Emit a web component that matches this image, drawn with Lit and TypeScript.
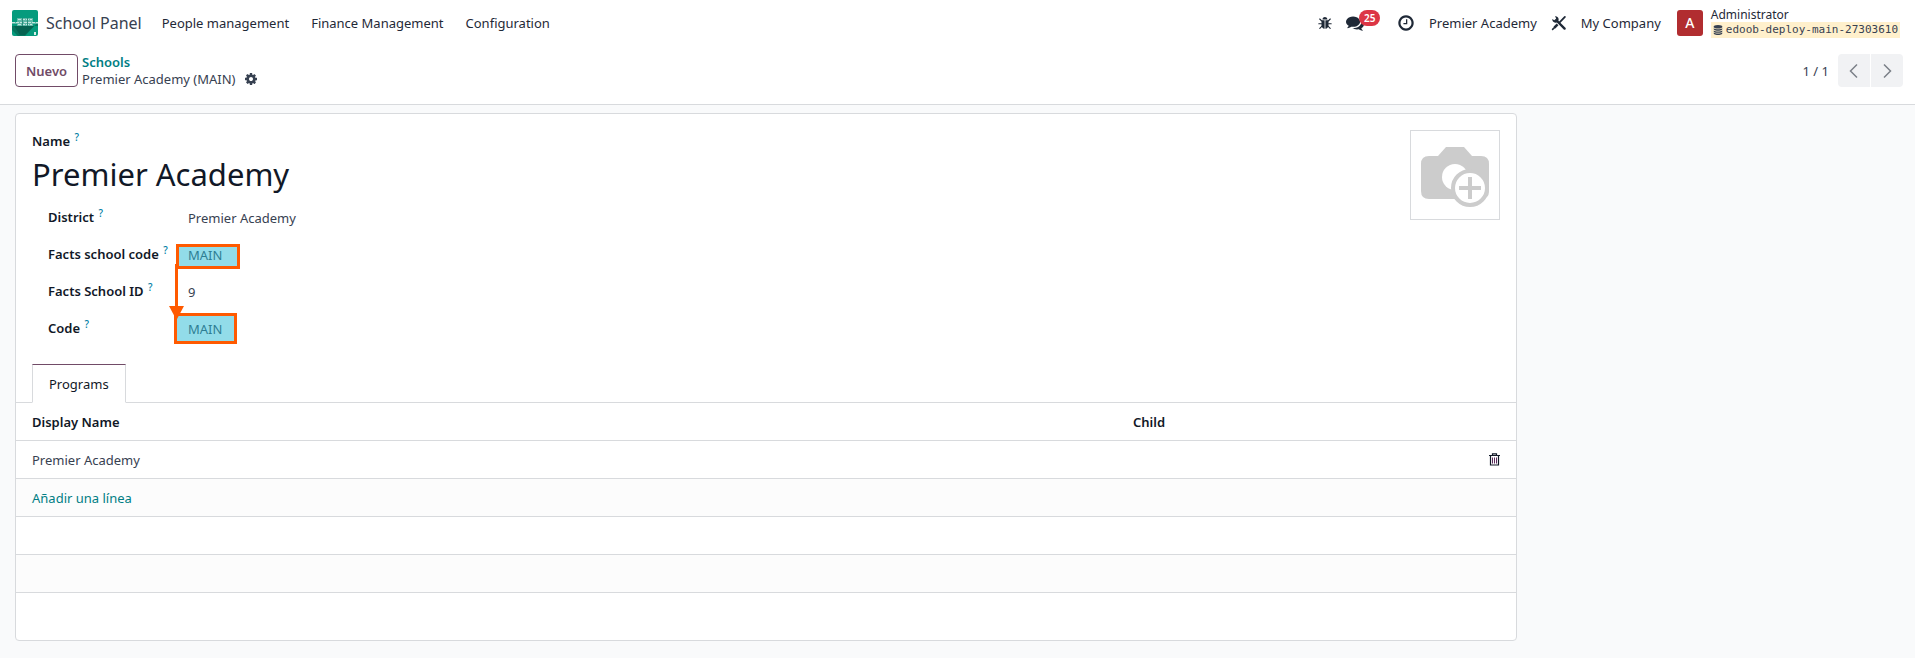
import { LitElement, html, css, svg } from "lit";
import { customElement, state } from "lit/decorators.js";

const COG = "M1152 896q0-106-75-181t-181-75-181 75-75 181 75 181 181 75 181-75 75-181zm512-109v222q0 12-8 23t-20 13l-185 28q-19 54-39 91 35 50 107 138 10 12 10 25t-9 23q-27 37-99 108t-94 71q-12 0-26-9l-138-108q-44 23-91 38-16 136-29 186-7 28-36 28h-222q-14 0-24.5-8.5t-11.5-21.5l-28-184q-49-16-90-37l-141 107q-10 9-25 9-14 0-25-11-126-114-165-168-7-10-7-23 0-12 8-23 15-21 51-66.5t54-70.5q-27-50-41-99l-183-27q-13-2-21-12.5t-8-23.5v-222q0-12 8-23t19-13l186-28q14-46 39-92-40-57-107-138-10-12-10-24 0-10 9-23 26-36 98.5-107.5t94.5-71.5q13 0 26 10l138 107q44-23 91-38 16-136 29-186 7-28 36-28h222q14 0 24.5 8.5t11.5 21.5l28 184q49 16 90 37l142-107q9-9 24-9 13 0 25 10 129 119 165 170 7 8 7 22 0 12-8 23-15 21-51 66.5t-54 70.5q26 50 41 98l183 28q13 2 21 12.5t8 23.5z";
const COMMENTS = "M1408 768q0 139-94 257t-256.5 186.5-353.5 68.5q-86 0-176-16-124 88-278 128-36 9-86 16h-3q-11 0-20.5-8t-11.5-21q-1-3-1-6.5t.5-6.5 2-6l2.5-5 3.5-5.5 4-5 4.5-5 4-4.5q5-6 23-25t26-29.5 22.5-29 25-38.5 20.5-44q-124-72-195-177t-71-224q0-139 94-257t256.5-186.5 353.5-68.5 353.5 68.5 256.5 186.5 94 257zm384 256q0 120-71 224.5t-195 176.5q10 24 20.5 44t25 38.5 22.5 29 26 29.5 23 25q1 1 4 4.5t4.5 5 4 5 3.5 5.5l2.5 5 2 6 .5 6.5-1 6.5q-3 14-13 22t-22 7q-50-7-86-16-154-40-278-128-90 16-176 16-271 0-472-132 58 4 88 4 161 0 309-45t264-129q125-92 192-212t67-254q0-77-23-152 129 71 204 178t75 230z";
const CLOCK = "M1024 544v448q0 14-9 23t-23 9h-320q-14 0-23-9t-9-23v-64q0-14 9-23t23-9h224v-352q0-14 9-23t23-9h64q14 0 23 9t9 23zm416 352q0-148-73-273t-198-198-273-73-273 73-198 198-73 273 73 273 198 198 273 73 273-73 198-198 73-273zm224 0q0 209-103 385.5t-279.5 279.5-385.5 103-385.5-103-279.5-279.5-103-385.5 103-385.5 279.5-279.5 385.5-103 385.5 103 279.5 279.5 103 385.5z";
const DATABASE = "M896 768q237 0 443-43t325-127v170q0 69-103 128t-280 93.5-385 34.5-385-34.5-280-93.5-103-128v-170q119 84 325 127t443 43zm0 768q237 0 443-43t325-127v170q0 69-103 128t-280 93.5-385 34.5-385-34.5-280-93.5-103-128v-170q119 84 325 127t443 43zm0-384q237 0 443-43t325-127v170q0 69-103 128t-280 93.5-385 34.5-385-34.5-280-93.5-103-128v-170q119 84 325 127t443 43zm0-1152q208 0 385 34.5t280 93.5 103 128v128q0 69-103 128t-280 93.5-385 34.5-385-34.5-280-93.5-103-128v-128q0-69 103-128t280-93.5 385-34.5z";

const glyph = (d: string, size: number) => html`
  <svg width=${size} height=${size} viewBox="0 0 1792 1792" fill="currentColor" aria-hidden="true">${svg`<path d=${d}></path>`}</svg>`;

const logo = html`
  <svg width="26" height="26" viewBox="0 0 26 26" aria-hidden="true">
    <defs><clipPath id="tile"><rect width="26" height="26" rx="2"></rect></clipPath></defs>
    <g clip-path="url(#tile)">
      <rect width="26" height="26" fill="#069b7d"></rect>
      <path d="M0 16H26V12L13 26H6L0 20Z" fill="#06775f"></path>
      <path d="M2 16H22L13 25H8Z" fill="#066351"></path>
      <path d="M0 12H5V8H21V12H26V14H21V16H5V14H0Z" fill="#5fb9a8"></path>
      <path d="M0 12.500H26M6 9.500H20M6 14.500H20" stroke="#c5e6df" stroke-width="1" stroke-dasharray="3 1"></path>
      <path d="M10.500 8V16M15.500 8V16" stroke="#2a8f7b"></path>
      <rect x="22" y="22" width="2" height="3" fill="#d9efe9"></rect>
    </g>
  </svg>`;

const bug = html`
  <svg width="14" height="14" viewBox="0 0 14 14" aria-hidden="true">
    <path d="M4.500 3.600a2.500 2.500 0 0 1 5 0z" fill="currentColor"></path>
    <path d="M3.500 4.300H6.600V12.800C4.600 12.600 3.500 11 3.500 9zM7.400 4.300H10.500V9C10.500 11 9.400 12.600 7.400 12.800z" fill="currentColor"></path>
    <path d="M1.700 3L3.800 5M12.300 3L10.200 5M.8 7.700H3.500M13.200 7.700H10.500M1.800 12.400L4 10.200M12.200 12.400L10 10.200" stroke="currentColor" stroke-width="1.100" stroke-linecap="round"></path>
  </svg>`;

const tools = html`
  <svg width="16" height="16" viewBox="0 0 16 16" fill="none" stroke="currentColor" aria-hidden="true">
    <path d="M5.500 5.500L13.600 13.600" stroke-width="2.400" stroke-linecap="round"></path>
    <path d="M4 1.300A3.200 3.200 0 1 1 1.300 4L3.300 5.300L5.200 3.400Z" fill="currentColor" stroke="none"></path>
    <path d="M13.900 1.900L8.600 7.400" stroke-width="1.800" stroke-linecap="round"></path>
    <path d="M6.600 9.400L3.400 12.600" stroke-width="2.600"></path>
    <path d="M4 12.100L1.600 14.400" stroke-width="1.600" stroke-linecap="round"></path>
  </svg>`;

const trash = html`
  <svg width="11" height="13" viewBox="0 0 11 13" fill="none" stroke="currentColor" aria-hidden="true">
    <path d="M0 2.500H11M1.500 2.500V12H9.500V2.500M3.500 2.500V.8H7.500V2.500" stroke-width="1.200"></path>
    <path d="M3.500 4.500V10.500M5.500 4.500V10.500M7.500 4.500V10.500" stroke="#5b2a5b"></path>
  </svg>`;

const camera = html`
  <svg width="88" height="88" viewBox="0 0 88 88" aria-hidden="true">
    <path d="M35 16H53L61 25H70Q78 25 78 33V60Q78 68 70 68H18Q10 68 10 60V33Q10 25 18 25H27Z" fill="#ccc"></path>
    <circle cx="44" cy="46" r="13" fill="#fff"></circle>
    <circle cx="59" cy="57" r="17" fill="#fff" stroke="#ccc" stroke-width="4"></circle>
    <path d="M59 46V68M48 57H70" stroke="#ccc" stroke-width="4"></path>
  </svg>`;

interface Field { id: string; label: string; value: string; }

@customElement("app-root")
export class AppRoot extends LitElement {
  @state() private fields: Field[] = [
    { id: "district", label: "District", value: "Premier Academy" },
    { id: "facts-code", label: "Facts school code", value: "MAIN" },
    { id: "facts-id", label: "Facts School ID", value: "9" },
    { id: "code", label: "Code", value: "MAIN" },
  ];

  static styles = css`
    :host { display: block; min-height: 100vh; background: #f9fafb; color: #374151; font: 13px/20px "Noto Sans", "Open Sans", sans-serif; }
    * { box-sizing: border-box; }
    svg { display: block; flex: none; }
    a { color: inherit; text-decoration: none; }
    button, input { font: inherit; color: inherit; border: 0; background: none; padding: 0; margin: 0; }
    button { cursor: pointer; }
    .nav { display: flex; align-items: center; height: 46px; padding: 0 15px 0 12px; background: #fff; color: #1f2937; }
    .brand { display: flex; align-items: center; gap: 8px; font-size: 16px; color: #374151; margin-right: 20px; }
    .menu { display: flex; gap: 22px; }
    .tray { display: flex; align-items: center; margin-left: auto; gap: 14px; }
    .chat { position: relative; margin-right: 19px; }
    .badge { position: absolute; left: 13px; top: -4px; padding: 0 5px; border-radius: 8px; background: #dc3545; color: #fff; font-size: 10px; line-height: 16px; font-weight: 600; }
    .user { display: flex; align-items: center; gap: 8px; text-align: left; margin-left: 2px; }
    .avatar { width: 26px; height: 26px; border-radius: 3px; background: #b12d30; color: #fff; line-height: 26px; text-align: center; font-size: 14px; font-weight: 500; }
    .who { display: grid; font-size: 12px; line-height: 14px; }
    .db { display: flex; align-items: center; gap: 3px; padding: 0 2px; background: #fff0cc; color: #374151; font: 11px/16px "DejaVu Sans Mono", monospace; }
    .panel { display: flex; align-items: center; height: 59px; padding: 0 12px 9px 15px; background: #fff; border-bottom: 1px solid #d8dadd; gap: 4px; }
    .new { height: 33px; padding: 0 10px; border: 1px solid #714b67; border-radius: 4px; color: #714b67; font-weight: 600; }
    .crumbs { display: grid; line-height: 17px; }
    .crumbs a { color: #017e84; font-weight: 600; }
    .here { display: flex; align-items: center; gap: 8px; }
    .pager { display: flex; align-items: center; margin-left: auto; gap: 1px; }
    .count { margin-right: 8px; }
    .step { display: grid; place-items: center; width: 32px; height: 33px; background: #f1f2f4; color: #7b8088; }
    .prev { border-radius: 4px 0 0 4px; }
    .next { border-radius: 0 4px 4px 0; }
    .sheet { max-width: 1502px; margin: 8px 15px 17px; padding: 16px 0 47px; background: #fff; border: 1px solid #d8dadd; border-radius: 4px; }
    .head { display: flex; justify-content: space-between; padding: 0 16px; }
    .titles { flex: 1; display: grid; align-content: start; padding-top: 1px; }
    label, th, .tab { color: #111827; }
    label { font-weight: 600; }
    sup { color: #0180a5; font-size: 10px; line-height: 10px; font-weight: 500; vertical-align: 5px; margin-left: 1px; }
    .title { width: 100%; height: 46px; font-size: 31px; color: #111827; }
    .photo { width: 90px; height: 90px; border: 1px solid #d8dadd; }
    .fields { position: relative; padding: 0 16px; margin-top: 1px; }
    .field { display: grid; grid-template-columns: 140px minmax(0, 480px); align-items: center; height: 37px; }
    .field input { padding-top: 2px; }
    .marks { position: absolute; left: 136px; top: 46px; pointer-events: none; }
    .tabs { display: flex; margin-top: 18px; padding: 0 16px; border-bottom: 1px solid #d8dadd; }
    .tab { height: 39px; padding: 0 16px; margin-bottom: -1px; background: #fff; border: 1px solid #d8dadd; border-top-color: #714b67; border-bottom-color: #fff; }
    table { width: 100%; border-collapse: separate; border-spacing: 0; table-layout: fixed; }
    th { text-align: left; font-weight: 600; }
    th, td { height: 38px; padding: 0 16px; border-bottom: 1px solid #d8dadd; }
    tbody tr:nth-child(even) { background: #fcfcfc; }
    .wide { width: 1101px; }
    .del { color: #111827; display: block; margin-left: auto; }
    .add { color: #017e84; }
  `;

  render() {
    return html`
      <header class="nav">
        <a class="brand" href="#">${logo}<span>School Panel</span></a>
        <nav class="menu">
          <a href="#">People management</a><a href="#">Finance Management</a><a href="#">Configuration</a>
        </nav>
        <div class="tray">
          <button aria-label="Debug">${bug}</button>
          <button class="chat" aria-label="Messages">${glyph(COMMENTS, 18)}<span class="badge">25</span></button>
          <button aria-label="Activities">${glyph(CLOCK, 18)}</button>
          <a href="#">Premier Academy</a>
          <button aria-label="Tools">${tools}</button>
          <a href="#">My Company</a>
          <button class="user">
            <span class="avatar">A</span>
            <span class="who"><span>Administrator</span><span class="db">${glyph(DATABASE, 10)}edoob-deploy-main-27303610</span></span>
          </button>
        </div>
      </header>
      <section class="panel">
        <button class="new">Nuevo</button>
        <div class="crumbs">
          <a href="#">Schools</a>
          <span class="here">Premier Academy (MAIN)<button aria-label="Actions">${glyph(COG, 14)}</button></span>
        </div>
        <div class="pager">
          <span class="count">1 / 1</span>
          <button class="step prev" aria-label="Previous">
            <svg width="16" height="16" viewBox="0 0 16 16" fill="none" stroke="currentColor" stroke-width="1.500"><path d="M11 1.500L4.500 8L11 14.500"></path></svg>
          </button>
          <button class="step next" aria-label="Next">
            <svg width="16" height="16" viewBox="0 0 16 16" fill="none" stroke="currentColor" stroke-width="1.500"><path d="M5 1.500L11.500 8L5 14.500"></path></svg>
          </button>
        </div>
      </section>
      <main class="sheet">
        <div class="head">
          <div class="titles">
            <label for="name">Name <sup>?</sup></label>
            <input id="name" class="title" .value=${"Premier Academy"} />
            <div class="fields">
              ${this.fields.map((f) => html`
                <div class="field">
                  <label for=${f.id}>${f.label} <sup>?</sup></label>
                  <input id=${f.id} .value=${f.value} />
                </div>`)}
              <svg class="marks" width="76" height="104" viewBox="0 0 76 104" aria-hidden="true">
                <g fill="#25b9d3" fill-opacity="0.500" stroke="#ff5a00" stroke-width="3">
                  <rect x="9.500" y="1.500" width="61" height="22"></rect>
                  <rect x="7.500" y="70.500" width="60" height="28"></rect>
                </g>
                <path d="M8.500 20V66" stroke="#ff5a00" stroke-width="3"></path>
                <path d="M1 62H16L8.500 76Z" fill="#ff5a00"></path>
              </svg>
            </div>
          </div>
          <button class="photo" aria-label="Add image">${camera}</button>
        </div>
        <div class="tabs" role="tablist"><button class="tab" role="tab" aria-selected="true">Programs</button></div>
        <table>
          <thead><tr><th class="wide">Display Name</th><th>Child</th></tr></thead>
          <tbody>
            <tr><td>Premier Academy</td><td><button class="del" aria-label="Delete">${trash}</button></td></tr>
            <tr><td colspan="2"><a class="add" href="#">Añadir una línea</a></td></tr>
            <tr><td colspan="2"></td></tr>
            <tr><td colspan="2"></td></tr>
          </tbody>
        </table>
      </main>`;
  }
}
